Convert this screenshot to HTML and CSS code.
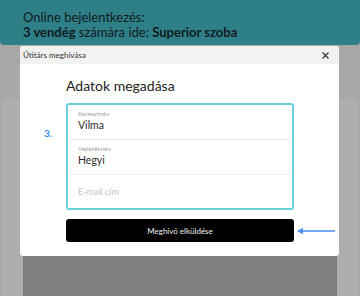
FILE: index.html
```html
<!DOCTYPE html>
<html lang="hu">

<head>
    <meta charset="UTF-8">
    <meta name="viewport" content="width=device-width, initial-scale=1.0">
    <title>Útitárs meghívása</title>
    <link rel="stylesheet" href="styles.css">
</head>

<body>
    <div class="banner">
        <p>Online bejelentkezés:</p>
        <p><b>3 vendég</b> számára ide: <b>Superior szoba</b></p>
    </div>

    <div class="stage">
        <div class="backdrop">
            <div class="modal">
                <div class="modalHead">
                    <span>Útitárs meghívása</span>
                    <svg class="close" width="7" height="7" viewBox="0 0 7 7">
                        <path d="M0.5 0.5 L6.5 6.5 M6.5 0.5 L0.5 6.5" stroke="#3a3a3a" stroke-width="1.3" />
                    </svg>
                </div>
                <div class="modalBody">
                    <h2 class="title">Adatok megadása</h2>
                    <div class="stepRow">
                        <span class="step">3.</span>
                        <div class="formBox">
                            <div class="field">
                                <span class="label">Keresztnév</span>
                                <span class="value">Vilma</span>
                            </div>
                            <div class="field">
                                <span class="label">Vezetéknév</span>
                                <span class="value">Hegyi</span>
                            </div>
                            <div class="field empty">
                                <span class="placeholder">E-mail cím</span>
                            </div>
                        </div>
                    </div>
                    <div class="sendRow">
                        <button class="send">Meghívó elküldése</button>
                        <svg class="arrow" width="38" height="8" viewBox="0 0 38 8">
                            <path d="M4 4 H38" stroke="#4a8cf0" stroke-width="1.4" />
                            <path d="M0 4 L6 0.8 L6 7.2 Z" fill="#4a8cf0" />
                        </svg>
                    </div>
                </div>
            </div>
            <div class="under"></div>
        </div>
    </div>
</body>

</html>
```

FILE: styles.css
```css
body {
    margin: 0;
    height: 296px;
    overflow: hidden;
    background: #a8a8a8;
    font-family: 'Lato', 'Liberation Sans', sans-serif;
    color: #1b1b1b;
}

.banner {
    height: 45px;
    box-sizing: border-box;
    padding: 10px 23px 0;
    background: #2e7f87;
    border-radius: 0 0 4px 4px;
    font-size: 13px;
    line-height: 15px;
    color: #101c1e;
}

.banner p {
    margin: 0;
}

.stage {
    padding: 0 2px;
}

.backdrop {
    padding: 1px 19px 0 18px;
    background: linear-gradient(#a8a8a8 54px, #aeaeae 54px);
}

.modal {
    background: white;
    border-radius: 3px;
    overflow: hidden;
}

.modalHead {
    height: 18px;
    display: flex;
    align-items: center;
    justify-content: space-between;
    padding: 0 10px 0 3px;
    background: #f2f2f2;
    font-size: 8px;
    color: #333;
}

.modalBody {
    padding: 13px 0 14px 24px;
}

.title {
    margin: 0 0 8px 22px;
    font-size: 14px;
    line-height: 18px;
    font-weight: 400;
    color: #222;
}

.stepRow {
    display: flex;
    align-items: flex-start;
}

.step {
    width: 22px;
    margin-top: 24px;
    font-size: 10px;
    font-weight: 700;
    color: #3b8beb;
}

.formBox {
    width: 228px;
    box-sizing: border-box;
    border: 2px solid #6ad2db;
    border-radius: 3px;
    padding: 0 2px;
}

.field {
    display: flex;
    flex-direction: column;
    padding: 4px 8px 7px;
    border-bottom: 1px solid #ececec;
}

.field.empty {
    border-bottom: none;
    height: 33px;
    box-sizing: border-box;
    padding: 0 8px;
    justify-content: center;
}

.label {
    font-size: 6.5px;
    line-height: 9px;
    color: #a3a3a3;
}

.value {
    font-size: 10.5px;
    line-height: 14px;
    color: #2a2a2a;
}

.placeholder {
    font-size: 9px;
    color: #c4c4c4;
}

.sendRow {
    display: flex;
    align-items: center;
    margin: 9px 0 0 22px;
}

.send {
    width: 228px;
    height: 23px;
    border: none;
    border-radius: 3px;
    background: #000;
    color: #f2f2f2;
    font-family: inherit;
    font-size: 8px;
    padding: 0;
}

.arrow {
    margin-left: 3px;
}

.under {
    margin: 0 2px 0 3px;
    height: 41px;
    background: #808080;
}
```
